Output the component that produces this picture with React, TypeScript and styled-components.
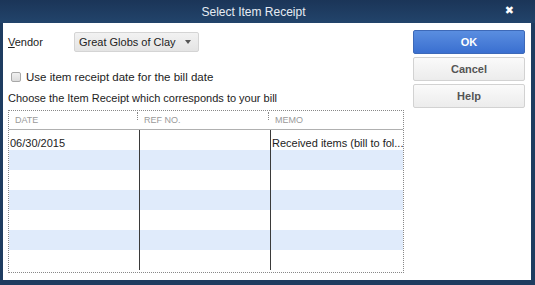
import React from "react";
import styled, { createGlobalStyle } from "styled-components";

const Global = createGlobalStyle`
  html, body { margin: 0; padding: 0; background: #1d3b5f; }
  body { font-family: "Liberation Sans", Arial, sans-serif; }
  * { box-sizing: border-box; }
`;

const Window = styled.div`
  width: 535px;
  height: 285px;
  background: #1e3c60;
  display: flex;
  flex-direction: column;
  padding: 0 4px 5px 3px;
`;

const TitleBar = styled.div`
  height: 23px;
  flex: none;
  display: flex;
  align-items: center;
  justify-content: center;
  position: relative;
  color: #e6ecf3;
  font-size: 12px;
  padding-right: 28px;
  margin: 0 -4px 0 -3px;
  background: linear-gradient(#1b3558, #22446b);
`;

const Close = styled.span`
  position: absolute;
  right: 21px;
  top: 4px;
  color: #fff;
  font-size: 11px;
  font-family: "DejaVu Sans", sans-serif;
`;

const Body = styled.div`
  flex: 1;
  background: #fff;
  display: flex;
  padding: 7px 6px 7px 5px;
  gap: 9px;
`;

const Left = styled.div`
  width: 396px;
  display: flex;
  flex-direction: column;
`;

const Right = styled.div`
  flex: 1;
  display: flex;
  flex-direction: column;
  gap: 3px;
`;

const Button = styled.button<{ $primary?: boolean }>`
  height: 24px;
  border-radius: 2px;
  font-family: "Liberation Sans", Arial, sans-serif;
  font-weight: bold;
  font-size: 11px;
  padding: 0;
  border: 1px solid ${(p) => (p.$primary ? "#3d69b8" : "#d2d2d2")};
  color: ${(p) => (p.$primary ? "#fff" : "#555")};
  background: ${(p) =>
    p.$primary
      ? "linear-gradient(#5a8ee0, #3a6fd0)"
      : "linear-gradient(#fafafa, #ececec)"};
`;

const VendorRow = styled.div`
  display: flex;
  align-items: center;
  height: 20px;
  margin-top: 2px;
`;

const Label = styled.span`
  font-size: 11px;
  color: #222;
  width: 66px;
  u { text-decoration: underline; }
`;

const Select = styled.div`
  width: 125px;
  height: 20px;
  border: 1px solid #d4d4d4;
  border-radius: 2px;
  background: linear-gradient(#f2f2f2, #e4e4e4);
  display: flex;
  align-items: center;
  justify-content: space-between;
  padding: 0 7px 0 4px;
  font-size: 11px;
  color: #222;
`;

const Caret = styled.span`
  width: 0;
  height: 0;
  border-left: 3px solid transparent;
  border-right: 3px solid transparent;
  border-top: 4px solid #555;
`;

const CheckRow = styled.div`
  display: flex;
  align-items: center;
  gap: 5px;
  margin-top: 20px;
  padding-left: 3px;
  font-size: 11.5px;
  color: #222;
  height: 10px;
`;

const Box = styled.span`
  width: 10px;
  height: 10px;
  border: 1px solid #a8a8a8;
  border-radius: 2px;
  background: linear-gradient(#f0f0f0, #dcdcdc);
`;

const Caption = styled.div`
  font-size: 11px;
  color: #222;
  margin-top: 10px;
  height: 13px;
  line-height: 13px;
`;

const Table = styled.div`
  margin-top: 5px;
  flex: 1;
  border: 1px dotted #888;
  display: grid;
  grid-template-columns: 130px 131px 1fr;
  grid-template-rows: 19px repeat(7, 20px);
  overflow: hidden;
`;

const Head = styled.div<{ $sep?: boolean }>`
  font-size: 9px;
  color: #9a9a9a;
  display: flex;
  align-items: center;
  padding-left: ${(p) => (p.$sep ? "5px" : "6px")};
  border-bottom: 1px solid #b0b0b0;
  position: relative;
  ${(p) =>
    p.$sep &&
    `&::before { content: ""; position: absolute; left: -2px; top: 1px; height: 8px; border-left: 1px dotted #888; }`}
`;

const Cell = styled.div<{ $band: boolean; $line?: boolean }>`
  background: ${(p) => (p.$band ? "#e0ebfb" : "#fff")};
  border-left: ${(p) => (p.$line ? "1px solid #3a3a3a" : "none")};
  font-size: 11px;
  color: #222;
  display: flex;
  align-items: flex-end;
  padding: 0 0 1px 1px;
  white-space: nowrap;
  overflow: hidden;
`;

const rows = [
  ["06/30/2015", "", "Received items (bill to fol..."],
  ["", "", ""],
  ["", "", ""],
  ["", "", ""],
  ["", "", ""],
  ["", "", ""],
  ["", "", ""],
];

export default function App() {
  return (
    <>
      <Global />
      <Window>
        <TitleBar>
          Select Item Receipt
          <Close>✖</Close>
        </TitleBar>
        <Body>
          <Left>
            <VendorRow>
              <Label>
                <u>V</u>endor
              </Label>
              <Select>
                Great Globs of Clay
                <Caret />
              </Select>
            </VendorRow>
            <CheckRow>
              <Box />
              Use item receipt date for the bill date
            </CheckRow>
            <Caption>Choose the Item Receipt which corresponds to your bill</Caption>
            <Table>
              <Head>DATE</Head>
              <Head $sep>REF NO.</Head>
              <Head $sep>MEMO</Head>
              {rows.map((r, i) =>
                r.map((c, j) => (
                  <Cell key={`${i}-${j}`} $band={i % 2 === 1} $line={j > 0}>
                    {c}
                  </Cell>
                ))
              )}
            </Table>
          </Left>
          <Right>
            <Button $primary>OK</Button>
            <Button>Cancel</Button>
            <Button>Help</Button>
          </Right>
        </Body>
      </Window>
    </>
  );
}
